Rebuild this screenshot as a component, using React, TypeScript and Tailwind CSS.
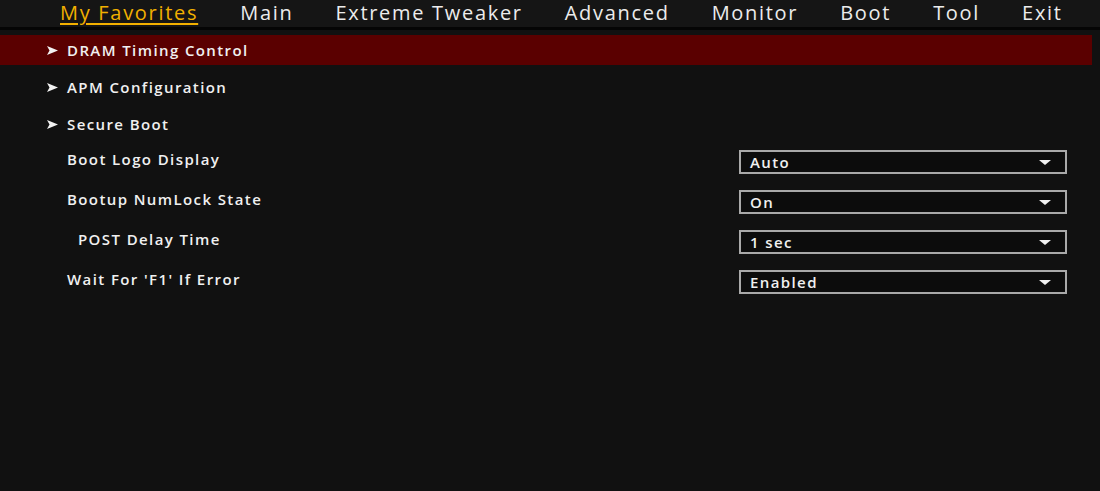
import React from 'react'

const tabs = ['My Favorites', 'Main', 'Extreme Tweaker', 'Advanced', 'Monitor', 'Boot', 'Tool', 'Exit']

const menus = ['DRAM Timing Control', 'APM Configuration', 'Secure Boot']

const options = [
  { label: 'Boot Logo Display', value: 'Auto', indent: false },
  { label: 'Bootup NumLock State', value: 'On', indent: false },
  { label: 'POST Delay Time', value: '1 sec', indent: true },
  { label: "Wait For 'F1' If Error", value: 'Enabled', indent: false },
]

function Arrow() {
  return (
    <svg width="11" height="9" viewBox="0 0 11 9" className="shrink-0">
      <polygon points="0,0 11,4.5 0,9 2.5,4.5" fill="#f2f2f2" />
    </svg>
  )
}

function Dropdown({ value }: { value: string }) {
  return (
    <div className="w-[328px] h-[24px] mt-[6px] border-2 border-[#a9a9a9] bg-[#0c0c0c] flex items-center justify-between pl-[9px] pr-[14px]">
      <span className="text-[15px] font-semibold tracking-[1.4px] text-[#f0f0f0] leading-[18px]">{value}</span>
      <svg width="12" height="5" viewBox="0 0 12 5">
        <polygon points="0,0 12,0 6,5" fill="#f0f0f0" />
      </svg>
    </div>
  )
}

export default function App() {
  return (
    <div className="w-[1100px] h-[491px] bg-[#111111] overflow-hidden" style={{ fontFamily: '"Open Sans", "Noto Sans", sans-serif' }}>
      {/* barra de pestanyes */}
      <div className="h-[30px] bg-[#151515] border-b-[3px] border-[#050505] flex items-start pl-[60px] gap-[42px]">
        {tabs.map((t, i) => (
          <div
            key={t}
            className={
              i === 0
                ? 'text-[20px] leading-[25px] font-medium tracking-[1.7px] whitespace-nowrap text-[#f2b000] underline decoration-2 underline-offset-[3px]'
                : 'text-[20px] leading-[25px] font-medium tracking-[1.7px] whitespace-nowrap text-[#ececec]'
            }
          >
            {t}
          </div>
        ))}
      </div>

      <div className="pt-[5px] pr-[8px]">
        {menus.map((m, i) => (
          <div
            key={m}
            className={
              i === 0
                ? 'h-[30px] bg-[#5a0000] flex items-center gap-[9px] pl-[47px]'
                : 'h-[30px] mt-[7px] flex items-center gap-[9px] pl-[47px]'
            }
          >
            <Arrow />
            <span className="text-[15px] font-semibold tracking-[1.4px] text-[#f0f0f0]">{m}</span>
          </div>
        ))}

        <div>
          {options.map((o) => (
            <div key={o.label} className="h-[40px] flex items-center justify-between pl-[67px] pr-[25px]">
              <span className={o.indent ? 'text-[15px] font-semibold tracking-[1.4px] text-[#f0f0f0] pl-[11px]' : 'text-[15px] font-semibold tracking-[1.4px] text-[#f0f0f0]'}>
                {o.label}
              </span>
              <Dropdown value={o.value} />
            </div>
          ))}
        </div>
      </div>
    </div>
  )
}
